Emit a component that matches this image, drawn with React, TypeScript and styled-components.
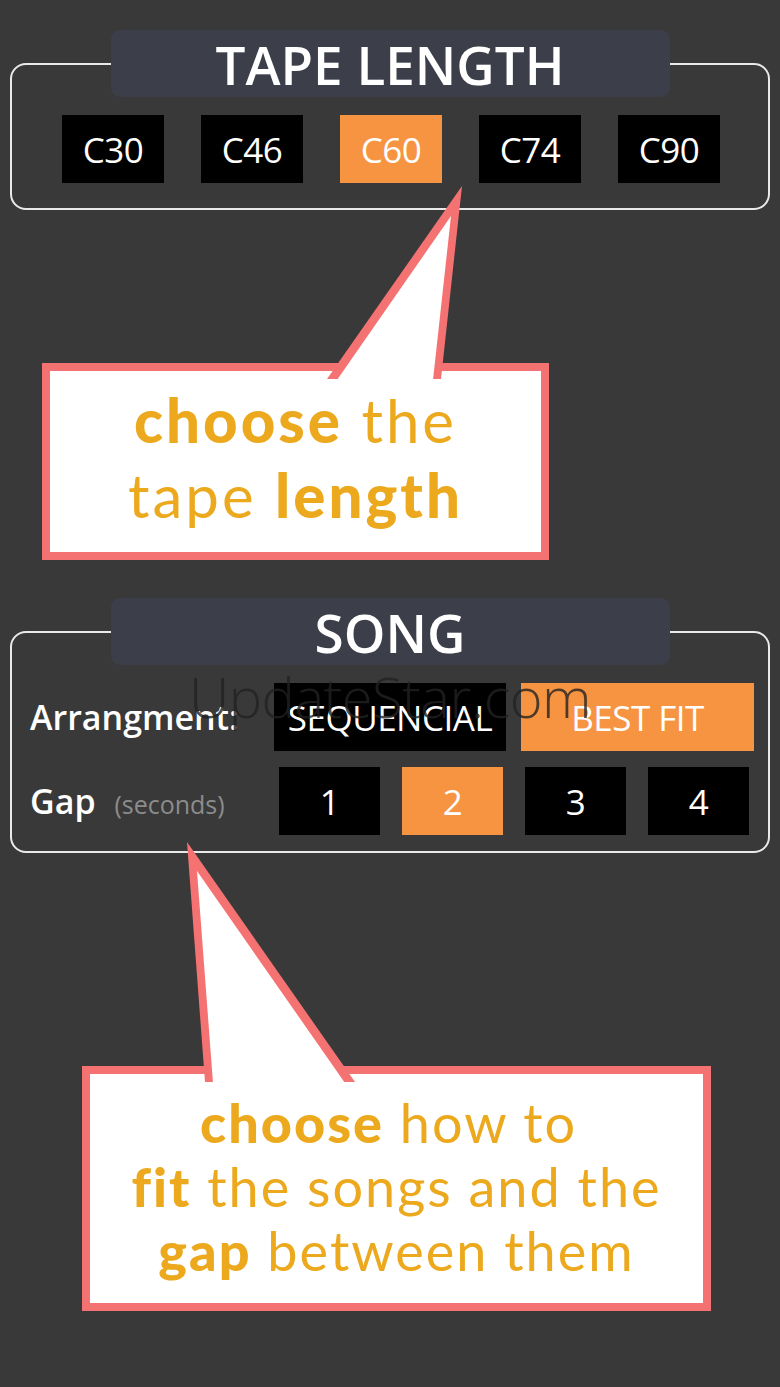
import React from "react";
import styled, { createGlobalStyle } from "styled-components";

const GlobalStyle = createGlobalStyle`
    html, body {
        margin: 0;
        padding: 0;
        background: #393939;
    }
    body {
        font-family: "Open Sans", "Noto Sans", sans-serif;
        color: #fff;
    }
`

const tapes = ["C30", "C46", "C60", "C74", "C90"];
const gaps = ["1", "2", "3", "4"];

type ChoiceProps = {
    active?: boolean;
    w: number;
}

type CalloutProps = {
    left: number;
    width: number;
    height: number;
    top: number;
    size: number;
    lh: number;
    spacing: number;
}

type PointerProps = {
    outer: string;
    inner: string;
    up: number;
}

// speech bubble tail: coral outline polygon with a white one inside it
function Pointer({ outer, inner, up }: PointerProps) {
    return (
        <Tail style={{ top: -up, height: up + 12 }} viewBox={`0 ${-up} 700 ${up + 12}`} preserveAspectRatio="xMinYMin meet">
            <polygon points={outer} fill="#f47372" />
            <polygon points={inner} fill="#ffffff" />
        </Tail>
    )
}

export default function App() {
    return (
        <Page>
            <GlobalStyle />
            <Section>
                <Tab>TAPE LENGTH</Tab>
                <Panel top={50} bottom={25} side={16}>
                    <TapeRow>
                        {tapes.map((t) => (
                            <Choice key={t} w={102} active={t === "C60"}>{t}</Choice>
                        ))}
                    </TapeRow>
                </Panel>
            </Section>

            <Callout left={32} width={507} height={197} top={12} size={60} lh={75} spacing={3}>
                <Pointer
                    up={185}
                    outer="420,-185 285,8 399,8"
                    inner="409,-155 295,9 391,9"
                />
                <Line><b>choose</b> the</Line>
                <Line>tape <b>length</b></Line>
            </Callout>

            <Section spaced>
                <Tab>SONG</Tab>
                <Panel top={50} bottom={16} side={18}>
                    <Row>
                        <Label>Arrangment:</Label>
                        <Group gap={15} inset={0}>
                            <Choice w={232}>SEQUENCIAL</Choice>
                            <Choice w={233} active>BEST FIT</Choice>
                        </Group>
                    </Row>
                    <Row>
                        <Label>Gap <Hint>(seconds)</Hint></Label>
                        <Group gap={22} inset={5}>
                            {gaps.map((g) => (
                                <Choice key={g} w={101} active={g === "2"}>{g}</Choice>
                            ))}
                        </Group>
                    </Row>
                </Panel>
                <Watermark>UpdateStar.com</Watermark>
            </Section>

            <Callout left={72} width={629} height={245} top={17} size={54} lh={64} spacing={2}>
                <Pointer
                    up={232}
                    outer="105,-232 123,8 273,8"
                    inner="115,-203 131,9 263,9"
                />
                <Line><b>choose</b> how to&nbsp;</Line>
                <Line><b>fit</b> the songs and the</Line>
                <Line><b>gap</b> between them</Line>
            </Callout>
        </Page>
    )
}

const Page = styled.div`
    display: flex;
    flex-direction: column;
    padding: 30px 10px 0;
    min-height: 1387px;
    box-sizing: border-box;
`
const Section = styled.section<{ spaced?: boolean }>`
    position: relative;
    display: flex;
    flex-direction: column;
    margin-top: ${({ spaced }) => (spaced ? "38px" : "0")};
`
const Tab = styled.div`
    position: relative;
    z-index: 1;
    align-self: center;
    width: 559px;
    height: 67px;
    margin-bottom: -34px;
    background: #3c3f4a;
    border-radius: 9px;
    display: flex;
    align-items: center;
    justify-content: center;
    font-size: 53px;
    font-weight: 600;
    line-height: 1;
    padding-top: 2px;
    box-sizing: border-box;
    color: #fff;
`
const Panel = styled.div<{ top: number; bottom: number; side: number }>`
    border: 2px solid #e9e9e9;
    border-radius: 16px;
    padding: ${({ top, bottom, side }) => `${top}px 14px ${bottom}px ${side}px`};
    display: flex;
    flex-direction: column;
    gap: 16px;
`
const TapeRow = styled.div`
    display: flex;
    justify-content: center;
    gap: 37px;
`
const Choice = styled.div<ChoiceProps>`
    width: ${({ w }) => w}px;
    height: 68px;
    flex-shrink: 0;
    background: ${({ active }) => (active ? "#f79441" : "#000")};
    color: #fff;
    display: flex;
    align-items: center;
    justify-content: center;
    font-size: 35px;
    letter-spacing: -0.5px;
    white-space: nowrap;
`
const Row = styled.div`
    display: flex;
    align-items: center;
`
const Label = styled.div`
    width: 244px;
    flex-shrink: 0;
    font-size: 34px;
    font-weight: 600;
    white-space: nowrap;
`
const Hint = styled.span`
    font-size: 25px;
    font-weight: 400;
    color: #8c8c8c;
    margin-left: 10px;
`
const Group = styled.div<{ gap: number; inset: number }>`
    display: flex;
    gap: ${({ gap }) => gap}px;
    padding-left: ${({ inset }) => inset}px;
`
const Watermark = styled.div`
    position: absolute;
    z-index: 2;
    top: 60px;
    left: 0;
    right: 0;
    text-align: center;
    font-size: 56px;
    font-weight: 300;
    color: rgba(34, 34, 34, 0.8);
    pointer-events: none;
    letter-spacing: -0.5px;
`
const Callout = styled.div<CalloutProps>`
    position: relative;
    margin-left: ${({ left }) => left}px;
    width: ${({ width }) => width}px;
    height: ${({ height }) => height}px;
    margin-top: ${({ left }) => (left < 50 ? "153px" : "213px")};
    box-sizing: border-box;
    border: 8px solid #f47372;
    background: #fff;
    padding-top: ${({ top }) => top}px;
    font-family: "Lato", "Noto Sans", sans-serif;
    font-size: ${({ size }) => size}px;
    line-height: ${({ lh }) => lh}px;
    letter-spacing: ${({ spacing }) => spacing}px;
    color: #eca91e;
    text-align: center;
    b {
        font-weight: 900;
    }
`
const Line = styled.div`
    position: relative;
    z-index: 1;
    white-space: nowrap;
`
const Tail = styled.svg`
    position: absolute;
    left: -8px;
    width: 700px;
    overflow: visible;
`
